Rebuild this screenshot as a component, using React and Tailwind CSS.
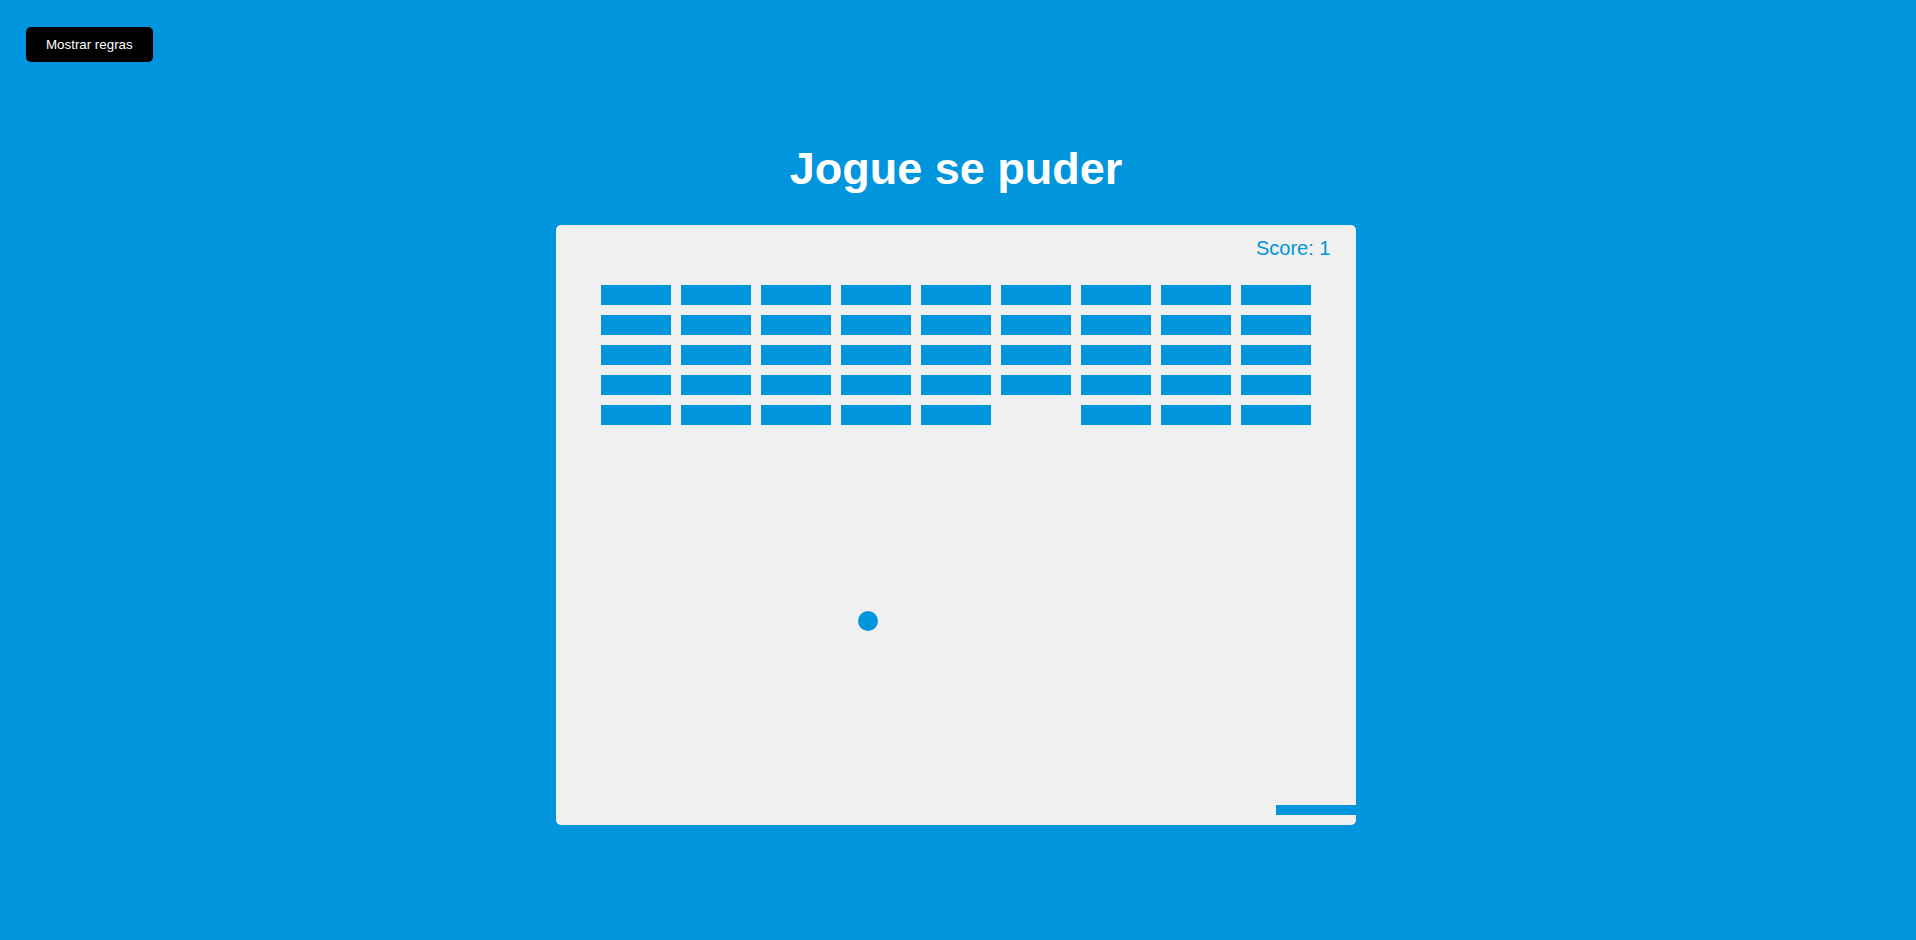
import React from 'react';

// Breakout board state captured as static data
const COLS = 9;
const ROWS = 5;
const BRICK = { w: 70, h: 20, pad: 10, offsetX: 45, offsetY: 60 };
const broken = new Set(['5-4']);

const bricks = [];
for (let c = 0; c < COLS; c++) {
  for (let r = 0; r < ROWS; r++) {
    if (broken.has(`${c}-${r}`)) continue;
    bricks.push({
      key: `${c}-${r}`,
      x: c * (BRICK.w + BRICK.pad) + BRICK.offsetX,
      y: r * (BRICK.h + BRICK.pad) + BRICK.offsetY,
    });
  }
}

const Board = () => (
  <svg width="800" height="600" viewBox="0 0 800 600" className="block rounded-[5px] bg-[#f0f0f0]">
    <text x="700" y="30" fill="#0095dd" fontSize="20" fontFamily="'Liberation Sans', Arial, sans-serif">
      Score: 1
    </text>
    {bricks.map((b) => (
      <rect key={b.key} x={b.x} y={b.y} width={BRICK.w} height={BRICK.h} fill="#0095dd" />
    ))}
    <circle cx="312" cy="396" r="10" fill="#0095dd" />
    <rect x="720" y="580" width="80" height="10" fill="#0095dd" />
  </svg>
);

const App = () => {
  return (
    <div className="relative flex h-screen w-full flex-col items-center justify-center overflow-hidden bg-[#0095dd] pr-[4px] pb-[2px] font-['Liberation_Sans',Arial,sans-serif]">
      <button className="absolute left-[26px] top-[27px] cursor-pointer rounded-[5px] bg-black px-5 py-[10px] text-[13.33px] leading-[15px] text-white">
        Mostrar regras
      </button>

      <h1 className="my-[30px] text-[45px] font-bold leading-[52px] text-white">Jogue se puder</h1>

      <Board />
    </div>
  );
};

export default App;
